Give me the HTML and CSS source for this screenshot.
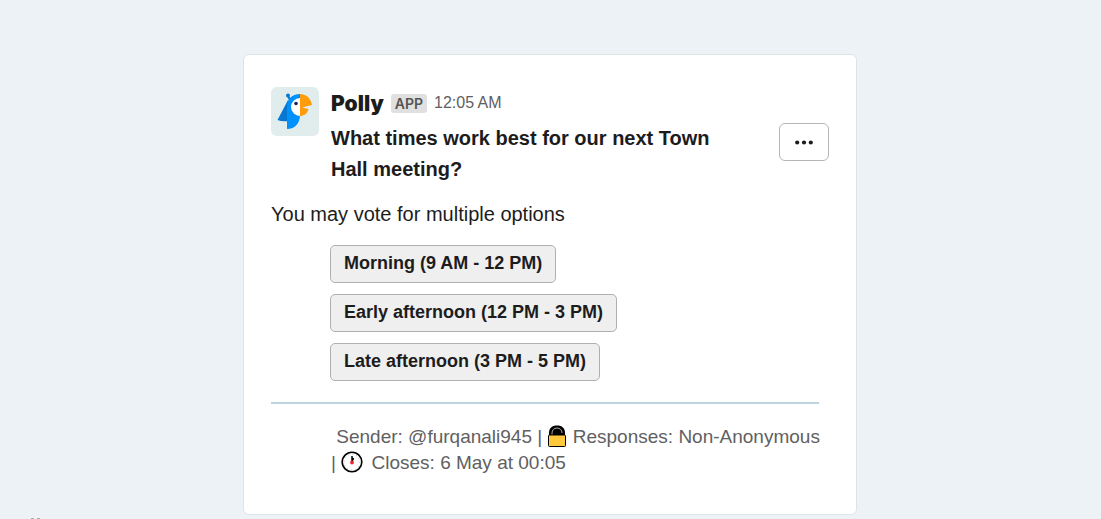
FILE: index.html
```html
<!DOCTYPE html>
<html lang="en">
<head>
    <meta charset="UTF-8">
    <meta name="viewport" content="width=device-width, initial-scale=1.0">
    <title>Polly</title>
    <link rel="stylesheet" href="styles.css">
</head>
<body>
    <main class="card">
        <header class="message">
            <svg class="avatar" viewBox="0 0 48 49" aria-hidden="true">
                <rect width="48" height="49" rx="6" fill="#e0edec"/>
                <path d="M17 13 L6.500 33 Q11 35 17 34 L22 22Z" fill="#0877d1"/>
                <path d="M17 9 L19 13" stroke="#0877d1" stroke-width="2"/>
                <circle cx="17" cy="8.500" r="2" fill="#0877d1"/>
                <path d="M29 7 C21 7 16 12 16 20 V42 C24 42 29 36 29 28Z" fill="#0091fb"/>
                <path d="M29 11 A9 9 0 0 0 29 29Z" fill="#fff"/>
                <circle cx="25" cy="16.500" r="1.800" fill="#17245a"/>
                <path d="M29 7 C36 7 40 12 41 18 L31 20.500 L37.500 22 C36 27 33 29 29 29Z" fill="#ff9c0b"/>
            </svg>
            <div class="message-body">
                <div class="meta">
                    <span class="name">Polly</span>
                    <span class="badge">APP</span>
                    <span class="time">12:05 AM</span>
                </div>
                <h1 class="question">What times work best for our next Town Hall meeting?</h1>
            </div>
            <button class="more" type="button" aria-label="More options">
                <svg class="dots" viewBox="0 0 18 5" aria-hidden="true">
                    <circle cx="2.200" cy="2.500" r="2.100"/>
                    <circle cx="9" cy="2.500" r="2.100"/>
                    <circle cx="15.800" cy="2.500" r="2.100"/>
                </svg>
            </button>
        </header>
        <p class="hint">You may vote for multiple options</p>
        <div class="options">
            <button class="option" type="button">Morning (9 AM - 12 PM)</button>
            <button class="option" type="button">Early afternoon (12 PM - 3 PM)</button>
            <button class="option" type="button">Late afternoon (3 PM - 5 PM)</button>
        </div>
        <hr class="divider">
        <p class="details">
            <span>&nbsp;Sender: @furqanali945</span>
            <span>|</span>
            <svg class="lock" viewBox="0 0 18 22" aria-hidden="true">
                <path d="M1 12 V8 C1 3 4 .5 9 .5 S17 3 17 8 V12Z" fill="#000"/>
                <path d="M4 10 V8 C4 5 6 3 9 3 S14 5 14 8" fill="none" stroke="#aaa" stroke-width="1"/>
                <rect x=".5" y="10" width="17" height="11.500" rx="1" fill="#ffc83d" stroke="#000"/>
            </svg>
            <span>Responses: Non-Anonymous</span>
            <span>|</span>
            <svg class="clock" viewBox="0 0 22 22" aria-hidden="true">
                <circle cx="11" cy="11" r="9.800" fill="#fff" stroke="#000" stroke-width="1.600"/>
                <circle cx="11" cy="11" r="7.800" fill="none" stroke="#bbb" stroke-dasharray="1 3.080"/>
                <path d="M11 11 V5 M11 11 L12.500 7" fill="none" stroke="#000" stroke-width="1.500"/>
                <circle cx="11" cy="11.500" r="1.900" fill="#f0262b"/>
            </svg>
            <span>Closes: 6 May at 00:05</span>
        </p>
    </main>
    <div class="marks"><i></i><i></i></div>
</body>
</html>
```
FILE: styles.css
```css
body {
    margin: 0;
    padding: 54px 21px 0 20px;
    background: #edf2f6;
    color: #1d1c1d;
    font-family: "Liberation Sans", Arial, sans-serif;
    font-size: 20px;
    overflow: hidden;
}

.card {
    box-sizing: border-box;
    max-width: 614px;
    margin: 0 auto;
    padding: 32px 27px 38px;
    background: #fff;
    border: 1px solid #dde4e8;
    border-radius: 6px;
}

.message {
    display: flex;
    align-items: flex-start;
}

.avatar {
    width: 48px;
    height: 49px;
    flex: none;
    margin-right: 12px;
}

.message-body {
    flex: 1;
}

.meta {
    display: flex;
    align-items: center;
    gap: 7px;
    height: 32px;
}

.name {
    font-family: Inter, "Arial Black", sans-serif;
    font-size: 21px;
    font-weight: 900;
}

.badge {
    padding: 0 4px;
    background: #e0e0e0;
    border-radius: 3px;
    color: #555;
    font-family: Inter, sans-serif;
    font-size: 14px;
    font-weight: 600;
    line-height: 19px;
}

.time {
    color: #616061;
    font-size: 16px;
}

.question {
    max-width: 400px;
    margin: 4px 0 0;
    font-size: 20px;
    line-height: 31px;
}

.more {
    display: flex;
    align-items: center;
    justify-content: center;
    width: 50px;
    height: 38px;
    margin-top: 36px;
    padding: 0;
    background: #fff;
    border: 1px solid #b5b5b5;
    border-radius: 6px;
}

.dots {
    width: 18px;
    height: 5px;
    fill: #1d1c1d;
}

.hint {
    margin: 14px 0 15px;
    line-height: 31px;
}

.options {
    display: flex;
    flex-direction: column;
    align-items: flex-start;
    gap: 11px;
    margin-left: 59px;
}

.option {
    height: 38px;
    padding: 0 13px 2px;
    background: #efefef;
    border: 1px solid #b0b0b0;
    border-radius: 5px;
    color: #1d1c1d;
    font-family: inherit;
    font-size: 18px;
    font-weight: bold;
}

.divider {
    height: 2px;
    margin: 21px 10px 20px 0;
    background: #bdd5e0;
    border: 0;
}

.details {
    margin: 0 0 0 60px;
    color: #616061;
    font-size: 19px;
    line-height: 26px;
}

.lock,
.clock {
    width: 22px;
    height: 22px;
    vertical-align: -4px;
}

.lock {
    width: 20px;
}

.clock {
    margin-right: 3px;
}

.marks {
    display: flex;
    gap: 3px;
    margin: 3px 0 0 11px;
}

.marks i {
    width: 3px;
    height: 1px;
    background: #aaa;
}
```
